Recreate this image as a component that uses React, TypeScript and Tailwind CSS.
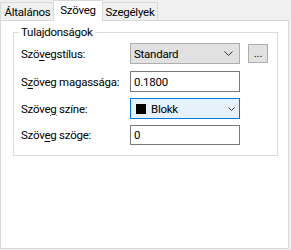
import React from "react";

const font = { fontFamily: 'Roboto, "Noto Sans", sans-serif' };

function Chevron({ w, h }: { w: number; h: number }) {
  return (
    <svg width={w} height={h} viewBox={`0 0 ${w} ${h}`} className="block">
      <polyline
        points={`0.5,0.5 ${w / 2},${h - 0.5} ${w - 0.5},0.5`}
        fill="none"
        stroke="#333"
        strokeWidth="1"
      />
    </svg>
  );
}

export default function App() {
  return (
    <div
      className="w-[291px] h-[250px] bg-[#f0f0f0] text-[11.5px] tracking-[-0.25px] leading-[16px] text-black whitespace-nowrap"
      style={font}
    >
      <div className="flex items-end h-[20px]">
        <div className="w-[53px] h-[18px] bg-[#f0f0f0] border-l border-t border-[#d9d9d9] flex items-center justify-center pl-[1px]">
          Általános
        </div>
        <div className="relative z-10 w-[50px] h-[21px] -mb-[1px] bg-white border-l border-r border-t border-[#d9d9d9] flex items-start justify-center pt-[1px]">
          Szöveg
        </div>
        <div className="w-[55px] h-[18px] bg-[#f0f0f0] border-t border-r border-[#d9d9d9] flex items-center justify-center">
          Szegélyek
        </div>
      </div>
      <div className="w-[289px] h-[229px] bg-white border border-[#d9d9d9] pt-[11px] pl-[12px]">
        <div className="relative w-[265px] h-[124px] border border-[#dcdcdc] pl-[7px] pt-[10px]">
          <div className="absolute left-[5px] -top-[9px] bg-white px-[2px]">Tulajdonságok</div>
          <div className="flex items-center h-[21px]">
            <div className="w-[109px]">
              Szö<span className="underline underline-offset-2">v</span>egstílus:
            </div>
            <div className="w-[110px] h-[21px] bg-[#e1e1e1] border border-[#adadad] flex items-center pl-[3px] pr-[6px]">
              <span className="flex-1">Standard</span>
              <Chevron w={9} h={5} />
            </div>
            <div className="ml-[8px] w-[20px] h-[19px] bg-[#e1e1e1] border border-[#adadad] flex items-center justify-center leading-[10px] pb-[2px]">
              ...
            </div>
          </div>
          <div className="flex items-center h-[21px] mt-[7px]">
            <div className="w-[109px]">
              S<span className="underline underline-offset-2">z</span>öveg magassága:
            </div>
            <div className="w-[110px] h-[21px] bg-white border border-[#7a7a7a] flex items-center pl-[3px]">
              0.1800
            </div>
          </div>
          <div className="flex items-center h-[21px] mt-[6px]">
            <div className="w-[109px]">
              Szöve<span className="underline underline-offset-2">g</span> színe:
            </div>
            <div className="w-[110px] h-[21px] bg-[#e5f1fb] border border-[#0078d7] flex items-center pl-[5px] pr-[4px]">
              <span className="w-[10px] h-[10px] bg-black mr-[5px]" />
              <span className="flex-1">Blokk</span>
              <Chevron w={7} h={4} />
            </div>
          </div>
          <div className="flex items-center h-[20px] mt-[6px]">
            <div className="w-[109px]">
              Szöv<span className="underline underline-offset-2">e</span>g szöge:
            </div>
            <div className="w-[110px] h-[20px] bg-white border border-[#7a7a7a] flex items-center pl-[3px]">
              0
            </div>
          </div>
        </div>
      </div>
    </div>
  );
}
